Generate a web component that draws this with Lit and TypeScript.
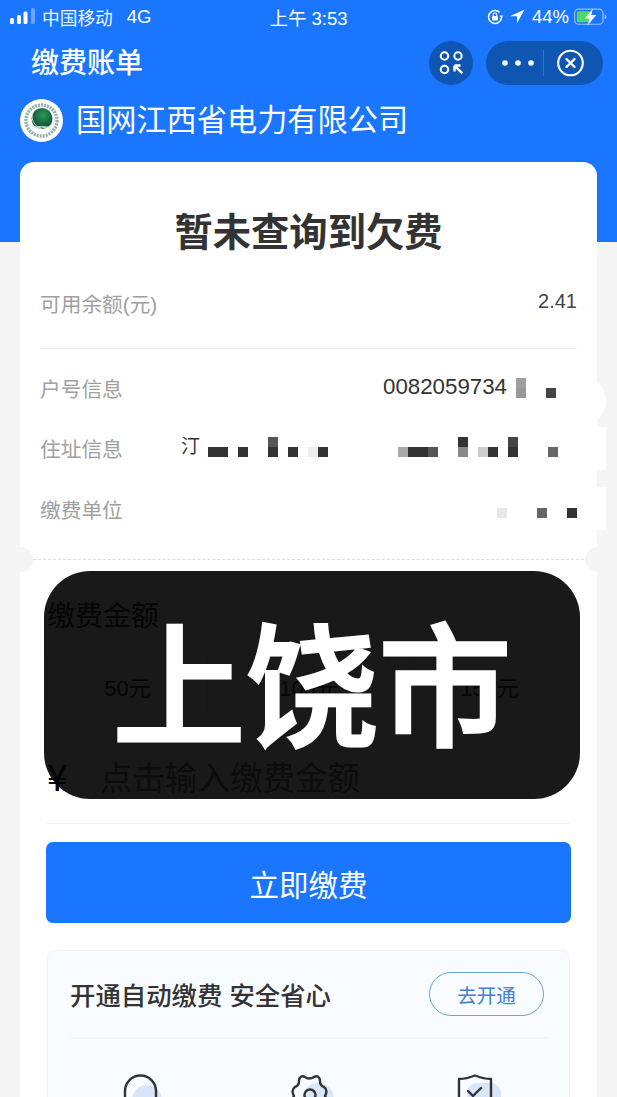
import { LitElement, html, css } from "lit";
import { customElement } from "lit/decorators.js";

type Cell = [number, number, string];

const ACCOUNT: Cell[] = [[0, 0, "#a0a0a0"], [0, 1, "#999"], [3, 1, "#444"]];
const ADDRESS: Cell[] = [
  [0, 1, "#333"], [1, 1, "#333"], [3, 1, "#333"], [6, 0, "#555"], [6, 1, "#333"], [8, 1, "#333"],
  [10, 1, "#eee"], [11, 1, "#333"], [19, 1, "#aaa"], [20, 1, "#333"], [21, 1, "#333"], [22, 1, "#555"],
  [25, 0, "#333"], [25, 1, "#888"], [27, 1, "#ccc"], [28, 1, "#333"], [30, 0, "#444"], [30, 1, "#333"], [34, 1, "#666"],
];
const UNIT: Cell[] = [[0, 1, "#e8e8e8"], [4, 1, "#666"], [7, 1, "#333"]];

@customElement("app-root")
export class AppRoot extends LitElement {
  static styles = css`
    :host { display: block; width: 617px; height: 1097px; overflow: hidden; }
    * { box-sizing: border-box; }
    .page {
      position: relative; width: 617px; height: 1097px; overflow: hidden;
      background: linear-gradient(#1a76ff 242px, #f5f5f5 242px);
      font-family: "Liberation Sans", "Noto Sans CJK SC", sans-serif; color: #333;
    }
    .status { height: 33px; display: grid; grid-template-columns: 1fr auto 1fr; align-items: center; color: #fff; padding: 0 10px; font-size: 17.7px; }
    .status-left { display: flex; align-items: center; gap: 6px; }
    .carrier { opacity: .93; }
    .net { margin-left: 8px; font-size: 18.5px; }
    .time { font-size: 18.5px; }
    .status-right { display: flex; align-items: center; justify-content: flex-end; font-size: 18.5px; gap: 7px; }
    .nav { height: 60px; padding: 0 14px 0 31px; display: flex; align-items: center; color: #fff; }
    .nav h1 { margin: 0; padding-bottom: 4px; font-size: 28px; font-weight: 500; flex: 1; }
    .round { width: 44px; height: 44px; border-radius: 50%; background: #0f56b3; display: flex; align-items: center; justify-content: center; margin-right: 13px; }
    .capsule { width: 117px; height: 44px; border-radius: 22px; background: #0f56b3; display: flex; align-items: center; }
    .company { height: 54px; padding-left: 20px; display: flex; align-items: center; gap: 14px; color: #fff; font-size: 30.2px; margin-bottom: 15px; }
    .company span { padding-bottom: 4px; margin-left: -1px; }
    .card { position: relative; margin: 0 20px; background: #fff; border-radius: 14px 14px 0 0; height: 1000px; padding: 0 20px; }
    .card h2 { margin: 0; padding-top: 47px; height: 118px; font-size: 38.3px; line-height: 48px; font-weight: 700; text-align: center; color: #333; }
    .row { display: flex; justify-content: space-between; align-items: center; font-size: 20.7px; color: #a0a0a0; }
    .balance { height: 69px; padding-bottom: 18px; border-bottom: 1px solid #eee; }
    .balance .lab { position: relative; top: -2px; }
    .balance .num { color: #444; font-size: 20px; position: relative; top: -4px; }
    .info { height: 60.5px; }
    .first { margin-top: 8.25px; }
    .val { display: flex; align-items: center; color: #333; position: relative; }
    .up { top: -1px; }
    .acct { font-size: 22.3px; margin-right: 9px; position: relative; top: -1px; }
    .right1 { margin-right: 1px; }
    .left1 { margin-right: -1px; }
    .ding { font-size: 19px; margin-right: 8px; line-height: 20px; }
    .mosaic { display: grid; grid-template-rows: 10px 10px; grid-auto-columns: 10px; }
    .cell { width: 10px; height: 10px; }
    .dash { height: 1px; margin: 20.25px -7px 0; border-top: 1px dashed #dcdcdc; }
    .notch { position: absolute; top: 385px; width: 25px; height: 25px; border-radius: 50%; background: #f5f5f5; }
    .n-l { left: -12.5px; } .n-r { right: -12.5px; }
    .bump { position: absolute; background: #fff; }
    .b1 { top: 216px; right: -9px; width: 40px; height: 46px; border-radius: 50%; }
    .b2 { top: 265px; right: -9px; width: 9px; height: 43px; }
    .b3 { top: 325px; right: -9px; width: 9px; height: 43px; }
    .amount { padding: 0 7px; color: #333; }
    .amount-title { font-size: 28px; line-height: 40px; margin-top: 37px; color: #333; }
    .chips { display: grid; grid-template-columns: repeat(3, 1fr); gap: 20px; margin-top: 16px; }
    .chip { height: 66px; border: 1px solid #e5e5e5; border-radius: 4px; font-size: 22px; display: flex; align-items: center; justify-content: center; color: #333; }
    .input { display: flex; align-items: center; margin-top: 34px; height: 44px; }
    .yen { width: 53px; font-size: 37px; line-height: 44px; color: #000; font-family: "Noto Sans CJK SC", sans-serif; }
    .ph { font-size: 32.5px; color: #777; }
    .line { height: 1px; background: #f2f2f2; margin-top: 26px; }
    .pay { height: 81px; margin: 18px -1px 0 -1px; border-radius: 7px; background: #1a76ff; color: #fff; font-size: 29.5px; display: flex; align-items: center; justify-content: center; }
    .auto { margin-top: 27px; height: 300px; background: #f8fbff; border: 1px solid #f1f4fa; border-radius: 8px; padding: 0 22px; }
    .auto-head { height: 88px; border-bottom: 2px solid #f2f5fa; display: flex; align-items: center; justify-content: space-between; }
    .auto-title { font-size: 25.4px; font-weight: 500; color: #333; white-space: pre; }
    .go { width: 115px; height: 44px; border: 1.5px solid #6ea3dd; border-radius: 22px; color: #3b82d8; font-size: 19.5px; display: flex; align-items: center; justify-content: center; margin-right: 3px; }
    .features { display: grid; grid-template-columns: repeat(3, 44px); gap: 123px; justify-content: start; padding: 35px 0 0 53px; }
    .overlay {
      position: absolute; left: 44px; top: 571px; width: 536px; height: 228px; border-radius: 46px;
      background: rgba(0, 0, 0, .9); color: #fff; font-size: 133px; font-weight: 500; padding-bottom: 14px;
      -webkit-text-stroke: 3px #fff;
      font-family: "Noto Sans CJK SC", sans-serif; display: flex; align-items: center; justify-content: center; line-height: 1;
    }
    svg { display: block; flex: none; }
  `;

  private mosaic(cells: Cell[], cols: number) {
    return html`<div class="mosaic" style="grid-template-columns:repeat(${cols},10px)">
      ${cells.map(([c, r, col]) => html`<div class="cell" style="grid-column:${c + 1};grid-row:${r + 1};background:${col}"></div>`)}
    </div>`;
  }

  private signal() {
    return html`<svg width="26" height="17" viewBox="0 0 26 17" fill="#fff">
      <rect x="0" y="10" width="4" height="6" rx="1.6"/><rect x="7" y="7" width="4" height="9" rx="1.6"/>
      <rect x="13.5" y="3.5" width="4" height="12.5" rx="1.6"/><rect x="21" y="0" width="4" height="16" rx="1.6" opacity=".35"/></svg>`;
  }

  private rightIcons() {
    return html`
      <svg width="18" height="18" viewBox="0 0 18 18" fill="none" stroke="#fff" stroke-width="1.6">
        <path d="M15.5 9A6.5 6.5 0 1 1 13.6 4.4"/>
        <path d="M13.5 7.5l2 2.5 1.8-2.5z" fill="#fff" stroke="none"/>
        <rect x="6" y="8" width="6" height="4.5" rx="1" fill="#fff" stroke="none"/><path d="M7.2 8V6.8a1.8 1.8 0 0 1 3.6 0V8" stroke-width="1.1"/>
      </svg>
      <svg width="15" height="15" viewBox="0 0 15 15" fill="#fff" style="margin-left:-1px"><path d="M14.5.5L0 7.2h7v7z"/></svg>
      <span>44%</span>
      <svg width="33" height="18" viewBox="0 0 35 18" fill="none" style="margin-left:-2px">
        <rect x=".7" y=".7" width="30" height="16" rx="4" stroke="#fff" stroke-opacity=".55" stroke-width="1.2"/>
        <rect x="3" y="3" width="14" height="11.6" rx="1.6" fill="#4cd964"/>
        <path d="M32.5 6v5.500c1.200-.4 1.800-1.400 1.800-2.700s-.6-2.400-1.800-2.800z" fill="#fff" fill-opacity=".55"/>
        <path d="M20 0L11.500 10.500h5L14.500 18l9-11h-5.200z" fill="#fff"/>
      </svg>`;
  }

  private logo() {
    return html`<svg width="43" height="43" viewBox="0 0 43 43">
      <defs><radialGradient id="g" cx=".55" cy=".35" r=".75"><stop offset="0" stop-color="#2f9a52"/><stop offset=".7" stop-color="#0e5a3c"/><stop offset="1" stop-color="#0b4a36"/></radialGradient></defs>
      <circle cx="21.500" cy="21.500" r="21.500" fill="#fff"/>
      <circle cx="21.500" cy="21.500" r="15.500" fill="none" stroke="#8fb0a8" stroke-width="3.400" stroke-dasharray="2 1"/>
      <circle cx="22" cy="19.500" r="10.500" fill="url(#g)"/>
      <path d="M9 25c6 5 19 5 25 0M11 30c7-3.500 14-3.500 21 0M13 14c-3 6 2 14 9 16" stroke="#d5e5de" stroke-width=".9" fill="none"/>
    </svg>`;
  }

  private scan() {
    return html`<svg width="28" height="28" viewBox="0 0 28 28" fill="none" stroke="#fff" stroke-width="2.100">
      <circle cx="7.500" cy="7" r="3.700"/><circle cx="21" cy="7" r="3.700"/><circle cx="7.500" cy="20.500" r="3.700"/>
      <path d="M17.500 16.500h6M17.500 16.500v6M17.800 16.800l7.500 7.500" stroke-width="2.400"/></svg>`;
  }

  private capsule() {
    return html`<svg width="117" height="44" viewBox="0 0 117 44" fill="none">
      <circle cx="19" cy="22" r="2.800" fill="#fff"/><circle cx="32" cy="22" r="2.800" fill="#fff"/><circle cx="45" cy="22" r="2.800" fill="#fff"/>
      <path d="M57.500 9v26" stroke="#fff" stroke-opacity=".18"/>
      <circle cx="84.500" cy="22" r="12.300" stroke="#fff" stroke-width="2.100"/>
      <path d="M80.500 18l8 8M88.500 18l-8 8" stroke="#fff" stroke-width="2.400" stroke-linecap="round"/></svg>`;
  }

  private features() {
    return html`<div class="features">
      <svg width="44" height="44" viewBox="0 0 44 44">
        <circle cx="24" cy="26" r="15" fill="#d7e6fb"/>
        <path d="M2 40V17a15.500 15.500 0 0 1 31 0v23" fill="none" stroke="#333" stroke-width="2.400"/>
      </svg>
      <svg width="44" height="44" viewBox="0 0 44 44">
        <circle cx="28" cy="25" r="16" fill="#d7e6fb"/>
        <path d="M4 34C2 31 2 25 4 22C2 19 2 15 5 13C8 12 9 9 9 7C9 3 12 1 15 3C17 5 21 5 24 3C27 1 30 3 30 7C30 9 31 12 34 13C37 15 37 19 35 22C37 25 37 31 35 34" fill="none" stroke="#333" stroke-width="2.400" stroke-linejoin="round"/>
        <circle cx="20" cy="21" r="5.500" fill="none" stroke="#333" stroke-width="2.400"/>
      </svg>
      <svg width="44" height="44" viewBox="0 0 44 44">
        <rect x="10" y="9" width="34" height="32" rx="10" fill="#d7e6fb"/>
        <path d="M2 40V5C8 5 13 3.500 18 1.500C23 3.500 28 5 34 5V40" fill="none" stroke="#333" stroke-width="2.400" stroke-linejoin="round"/>
        <path d="M11 17l5 5 8-8" fill="none" stroke="#333" stroke-width="2.400" stroke-linecap="round"/>
      </svg>
    </div>`;
  }

  render() {
    return html`<div class="page">
      <div class="status">
        <div class="status-left">${this.signal()}<span class="carrier">中国移动</span><span class="net">4G</span></div>
        <div class="time">上午 3:53</div>
        <div class="status-right">${this.rightIcons()}</div>
      </div>
      <div class="nav">
        <h1>缴费账单</h1>
        <div class="round">${this.scan()}</div>
        <div class="capsule">${this.capsule()}</div>
      </div>
      <div class="company">${this.logo()}<span>国网江西省电力有限公司</span></div>
      <div class="card">
        <h2>暂未查询到欠费</h2>
        <div class="row balance"><span class="lab">可用余额(元)</span><span class="num">2.41</span></div>
        <div class="row info first"><span>户号信息</span><span class="val right1"><span class="acct">0082059734</span>${this.mosaic(ACCOUNT, 6)}</span></div>
        <div class="row info"><span>住址信息</span><span class="val up left1"><span class="ding">汀</span>${this.mosaic(ADDRESS, 37)}</span></div>
        <div class="row info"><span>缴费单位</span><span class="val up">${this.mosaic(UNIT, 8)}</span></div>
        <div class="dash"></div>
        <div class="notch n-l"></div><div class="notch n-r"></div>
        <div class="bump b1"></div><div class="bump b2"></div><div class="bump b3"></div>
        <div class="amount">
          <div class="amount-title">缴费金额</div>
          <div class="chips"><div class="chip">50元</div><div class="chip">100元</div><div class="chip">150元</div></div>
          <div class="input"><span class="yen">¥</span><span class="ph">点击输入缴费金额</span></div>
          <div class="line"></div>
          <div class="pay">立即缴费</div>
          <div class="auto">
            <div class="auto-head"><span class="auto-title">开通自动缴费 安全省心</span><span class="go">去开通</span></div>
            ${this.features()}
          </div>
        </div>
      </div>
      <div class="overlay">上饶市</div>
    </div>`;
  }
}
